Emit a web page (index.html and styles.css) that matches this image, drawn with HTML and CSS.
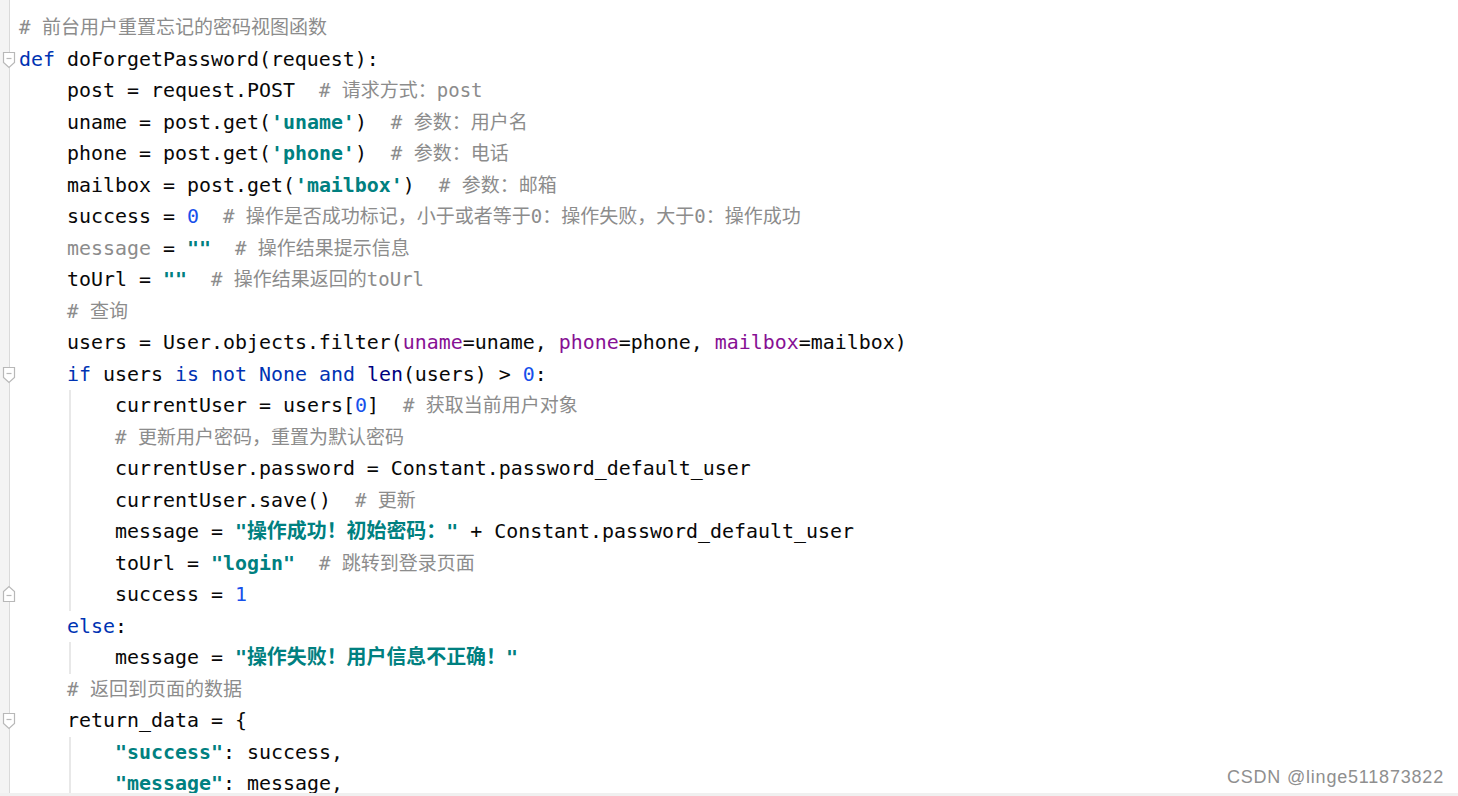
FILE: index.html
```html
<!DOCTYPE html>
<html lang="zh">
<head>
  <meta charset="UTF-8">
  <title>doForgetPassword</title>
  <link rel="stylesheet" href="styles.css">
</head>
<body>
  <div class="editor">
    <div class="gutter"></div>
    <div class="code">
      <div class="line"><span class="cm"># 前台用户重置忘记的密码视图函数</span></div>
      <div class="line"><svg class="fold" width="14" height="18" viewBox="0 0 14 18"><path d="M1.5 1.5H12.5V11.5L7 16.5L1.5 11.5Z"/><path d="M4.5 7.5H9.5"/></svg><span class="kw">def</span> doForgetPassword(request):</div>
      <div class="line i1">post = request.POST  <span class="cm"># 请求方式：post</span></div>
      <div class="line i1">uname = post.get(<span class="str">'uname'</span>)  <span class="cm"># 参数：用户名</span></div>
      <div class="line i1">phone = post.get(<span class="str">'phone'</span>)  <span class="cm"># 参数：电话</span></div>
      <div class="line i1">mailbox = post.get(<span class="str">'mailbox'</span>)  <span class="cm"># 参数：邮箱</span></div>
      <div class="line i1">success = <span class="num">0</span>  <span class="cm"># 操作是否成功标记，小于或者等于0：操作失败，大于0：操作成功</span></div>
      <div class="line i1"><span class="unused">message</span> = <span class="str">""</span>  <span class="cm"># 操作结果提示信息</span></div>
      <div class="line i1">toUrl = <span class="str">""</span>  <span class="cm"># 操作结果返回的toUrl</span></div>
      <div class="line i1"><span class="cm"># 查询</span></div>
      <div class="line i1">users = User.objects.filter(<span class="kwarg">uname</span>=uname, <span class="kwarg">phone</span>=phone, <span class="kwarg">mailbox</span>=mailbox)</div>
      <div class="line i1"><svg class="fold" width="14" height="18" viewBox="0 0 14 18"><path d="M1.5 1.5H12.5V11.5L7 16.5L1.5 11.5Z"/><path d="M4.5 7.5H9.5"/></svg><span class="kw">if</span> users <span class="kw">is not None and</span> <span class="builtin">len</span>(users) &gt; <span class="num">0</span>:</div>
      <div class="guide">
        <div class="line">currentUser = users[<span class="num">0</span>]  <span class="cm"># 获取当前用户对象</span></div>
        <div class="line"><span class="cm"># 更新用户密码，重置为默认密码</span></div>
        <div class="line">currentUser.password = Constant.password_default_user</div>
        <div class="line">currentUser.save()  <span class="cm"># 更新</span></div>
        <div class="line">message = <span class="str">"操作成功！初始密码："</span> + Constant.password_default_user</div>
        <div class="line">toUrl = <span class="str">"login"</span>  <span class="cm"># 跳转到登录页面</span></div>
        <div class="line"><svg class="fold end" width="14" height="18" viewBox="0 0 14 18"><path d="M1.5 16.5H12.5V6.5L7 1.5L1.5 6.5Z"/><path d="M4.5 10.5H9.5"/></svg>success = <span class="num">1</span></div>
      </div>
      <div class="line i1"><span class="kw">else</span>:</div>
      <div class="guide">
        <div class="line">message = <span class="str">"操作失败！用户信息不正确！"</span></div>
      </div>
      <div class="line i1"><span class="cm"># 返回到页面的数据</span></div>
      <div class="line i1"><svg class="fold" width="14" height="18" viewBox="0 0 14 18"><path d="M1.5 1.5H12.5V11.5L7 16.5L1.5 11.5Z"/><path d="M4.5 7.5H9.5"/></svg>return_data = {</div>
      <div class="guide open">
        <div class="line"><span class="str">"success"</span>: success,</div>
        <div class="line"><span class="str">"message"</span>: message,</div>
      </div>
    </div>
    <div class="watermark">CSDN @linge511873822</div>
  </div>
</body>
</html>
```

FILE: styles.css
```css
html, body { margin: 0; background: #f0f0f0; }
.editor {
  position: relative;
  display: flex;
  height: 793px;
  overflow: hidden;
  background: #fff;
}
.gutter {
  flex: none;
  width: 9px;
  background: #f4f4f4;
  border-right: 1px solid #dadada;
}
.code {
  flex: 1;
  padding: 12px 0 0 9px;
  font-family: "DejaVu Sans Mono", "Noto Sans CJK SC", monospace;
  font-size: 19.93px;
  color: #080808;
}
.line { height: 31.5px; line-height: 31.5px; white-space: pre; }
.line.i1 { padding-left: 48px; }
.guide {
  margin-left: 50px;
  padding-left: 44px;
  border-left: 2px solid #e8e8e8;
}
.guide.open { padding-bottom: 20px; }
.fold {
  position: absolute;
  left: 2px;
  margin-top: 7px;
  fill: #fff;
  stroke: #b8b8b8;
  stroke-width: 1.2;
}
.fold.end { margin-top: 6px; }
.kw { color: #0033b3; }
.builtin { color: #000080; }
.num { color: #1750eb; }
.str { color: #008080; font-weight: bold; }
.kwarg { color: #871094; }
.cm { color: #8c8c8c; font-size: 19px; }
.unused { color: #8c8c8c; }
.watermark {
  position: absolute;
  right: 14px;
  bottom: 5px;
  font-family: "Liberation Sans", Arial, sans-serif;
  font-size: 18px;
  letter-spacing: 0.8px;
  color: #8f8f8f;
}
```
